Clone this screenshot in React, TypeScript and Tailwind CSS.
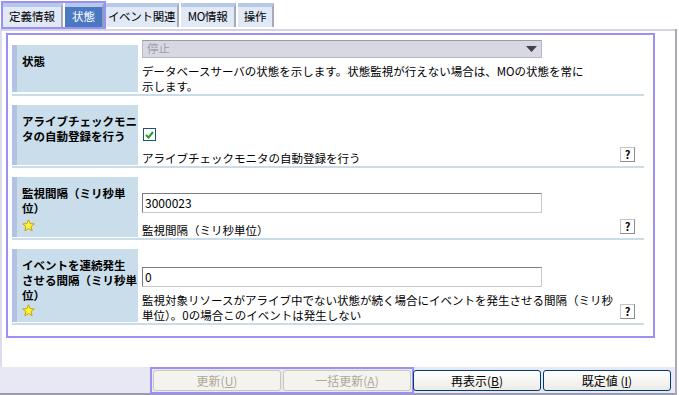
import { FC, ReactNode } from "react";

const Star: FC = () => (
  <svg width="13" height="13" viewBox="0 0 13 13">
    <polygon
      points="6.5,0.8 8.1,4.6 12.2,4.9 9.1,7.6 10.1,11.8 6.5,9.5 2.9,11.8 3.9,7.6 0.8,4.9 4.9,4.6"
      fill="#fff43c"
      stroke="#c8a200"
      strokeWidth="1"
      strokeLinejoin="round"
    />
  </svg>
);

const HelpButton: FC = () => (
  <div className="mb-[4px] mr-[9px] flex h-[15px] w-[15px] shrink-0 items-center justify-center border border-[#c4c4c4] border-b-[#8c8c8c] border-r-[#8c8c8c] bg-white text-[11px] font-bold leading-none text-black">
    ?
  </div>
);

interface RowProps {
  label: ReactNode;
  labelClass: string;
  star?: boolean;
  control: ReactNode;
  desc: ReactNode;
  help?: boolean;
}

const Row: FC<RowProps> = ({ label, labelClass, star, control, desc, help }) => (
  <div className="flex border-b-2 border-b-[#c9dcea]">
    <div className={`flex w-[126px] shrink-0 bg-[#c9ddeb] ${labelClass}`}>
      <div className="w-[5px] shrink-0 bg-[#b2c2e2]" />
      <div className="flex flex-1 flex-col pl-[5px] pt-[9px] pb-[5px]">
        <div className="text-[11.5px] font-bold leading-[15px] whitespace-nowrap text-black">
          {label}
        </div>
        {star && (
          <div className="mt-auto">
            <Star />
          </div>
        )}
      </div>
    </div>
    <div className="ml-[4px] flex flex-1 flex-col justify-end gap-[6px]">
      {control}
      <div className="flex items-end justify-between">
        <p className="text-[11.5px] leading-[15px] whitespace-nowrap text-black">{desc}</p>
        {help && <HelpButton />}
      </div>
    </div>
  </div>
);

const TextInput: FC<{ value: string }> = ({ value }) => (
  <div className="flex h-[20px] w-[400px] items-center border border-[#c8c8d0] border-l-[#7c7c88] border-t-[#7c7c88] bg-white pl-[2px] text-[12px] text-black">
    {value}
  </div>
);

const App: FC = () => {
  const tabs = [
    { name: "イベント関連", w: "w-[73px]" },
    { name: "MO情報", w: "w-[55px]" },
    { name: "操作", w: "w-[36px]" },
  ];

  return (
    <div className="h-[395px] w-[679px] overflow-hidden bg-white font-['Noto_Sans_CJK_JP','Noto_Sans',sans-serif] text-black">
      {/* tab strip */}
      <div className="flex h-[29px] items-start gap-[2px] pl-[3px] pt-[3px]">
        <div className="flex gap-[2px] outline-2 outline-[#9b90f5]">
          <div className="flex h-[24px] w-[60px] items-center justify-center border-r-2 border-t-4 border-r-[#a8a8b8] border-t-[#b7c8e8] bg-[#e1e9f6] text-[11.5px] whitespace-nowrap">
            定義情報
          </div>
          <div className="flex h-[24px] w-[39px] items-center justify-center border-r-2 border-t-4 border-r-[#8d9cc0] border-t-[#b7c8e8] bg-[#4b79c1] text-[11.5px] whitespace-nowrap text-white">
            状態
          </div>
        </div>
        {tabs.map((t) => (
          <div
            key={t.name}
            className={`flex h-[24px] ${t.w} items-center justify-center border-r-2 border-t-4 border-r-[#a8a8b8] border-t-[#b7c8e8] bg-[#e1e9f6] text-[11.5px] tracking-[-0.3px] whitespace-nowrap`}
          >
            {t.name}
          </div>
        ))}
      </div>

      <div className="w-[677px] border-r-2 border-r-[#a8a8b8]">
        {/* panel */}
        <div className="h-[338px] border-l-2 border-t-2 border-l-[#dcdcec] border-t-[#d4d4e6] pl-[4px] pt-[2px]">
          <div className="w-[649px] border-2 border-[#9b90f5] pl-[4px] pr-[9px]">
            <Row
              label="状態"
              labelClass="mt-[10px] mb-[2px] h-[47px]"
              control={
                <div className="flex h-[18px] w-[400px] items-center justify-between border border-[#b8b8c4] border-t-[#9a9aa8] bg-[#d8d8e4] pl-[4px] pr-[4px] text-[11.5px] text-[#a0a0a8]">
                  停止
                  <svg width="11" height="6" viewBox="0 0 11 6">
                    <polygon points="0,0 11,0 5.5,6" fill="#404048" />
                  </svg>
                </div>
              }
              desc={
                <>
                  データベースサーバの状態を示します。状態監視が行えない場合は、MOの状態を常に
                  <br />
                  示します。
                </>
              }
            />
            <Row
              label={
                <>
                  アライブチェックモニ
                  <br />
                  タの自動登録を行う
                </>
              }
              labelClass="mt-[9px] mb-[1px] h-[60px]"
              control={
                <div className="ml-[1px] flex h-[13px] w-[13px] items-center justify-center border border-[#1c5180] bg-white">
                  <svg width="9" height="8" viewBox="0 0 9 8">
                    <path d="M1 4 L3.5 6.5 L8 1" fill="none" stroke="#21a121" strokeWidth="2" />
                  </svg>
                </div>
              }
              desc="アライブチェックモニタの自動登録を行う"
              help
            />
            <Row
              label={
                <>
                  監視間隔（ミリ秒単
                  <br />
                  位）
                </>
              }
              labelClass="mt-[9px] mb-[1px] h-[60px]"
              star
              control={<TextInput value="3000023" />}
              desc="監視間隔（ミリ秒単位）"
              help
            />
            <Row
              label={
                <>
                  イベントを連続発生
                  <br />
                  させる間隔（ミリ秒単
                  <br />
                  位）
                </>
              }
              labelClass="mt-[9px] mb-[1px] h-[73px]"
              star
              control={<TextInput value="0" />}
              desc={
                <>
                  監視対象リソースがアライブ中でない状態が続く場合にイベントを発生させる間隔（ミリ秒
                  <br />
                  単位）。0の場合このイベントは発生しない
                </>
              }
              help
            />
            <div className="h-[11px]" />
          </div>
        </div>

        {/* button bar */}
        <div className="flex h-[28px] items-start justify-end gap-[2px] border-b-2 border-b-[#9c9cab] bg-[#e8e8f5] pr-[4px] pt-[3px]">
          <div className="flex gap-[2px] outline-2 outline-offset-[1px] outline-[#9b90f5]">
            <div className="flex h-[21px] w-[128px] items-center justify-center rounded-[3px] border border-[#cbc7b8] bg-[#f4f3ee] text-[12px] text-[#aca899]">
              更新(<span className="underline">U</span>)
            </div>
            <div className="flex h-[21px] w-[128px] items-center justify-center rounded-[3px] border border-[#cbc7b8] bg-[#f4f3ee] text-[12px] text-[#aca899]">
              一括更新(<span className="underline">A</span>)
            </div>
          </div>
          <div className="flex h-[21px] w-[128px] items-center justify-center rounded-[3px] border border-[#003c74] bg-linear-to-b from-white to-[#ecebe6] text-[12px]">
            再表示(<span className="underline">B</span>)
          </div>
          <div className="flex h-[21px] w-[128px] items-center justify-center rounded-[3px] border border-[#003c74] bg-linear-to-b from-white to-[#ecebe6] text-[12px]">
            既定値 (<span className="underline">I</span>)
          </div>
        </div>
      </div>
    </div>
  );
};

export default App;
